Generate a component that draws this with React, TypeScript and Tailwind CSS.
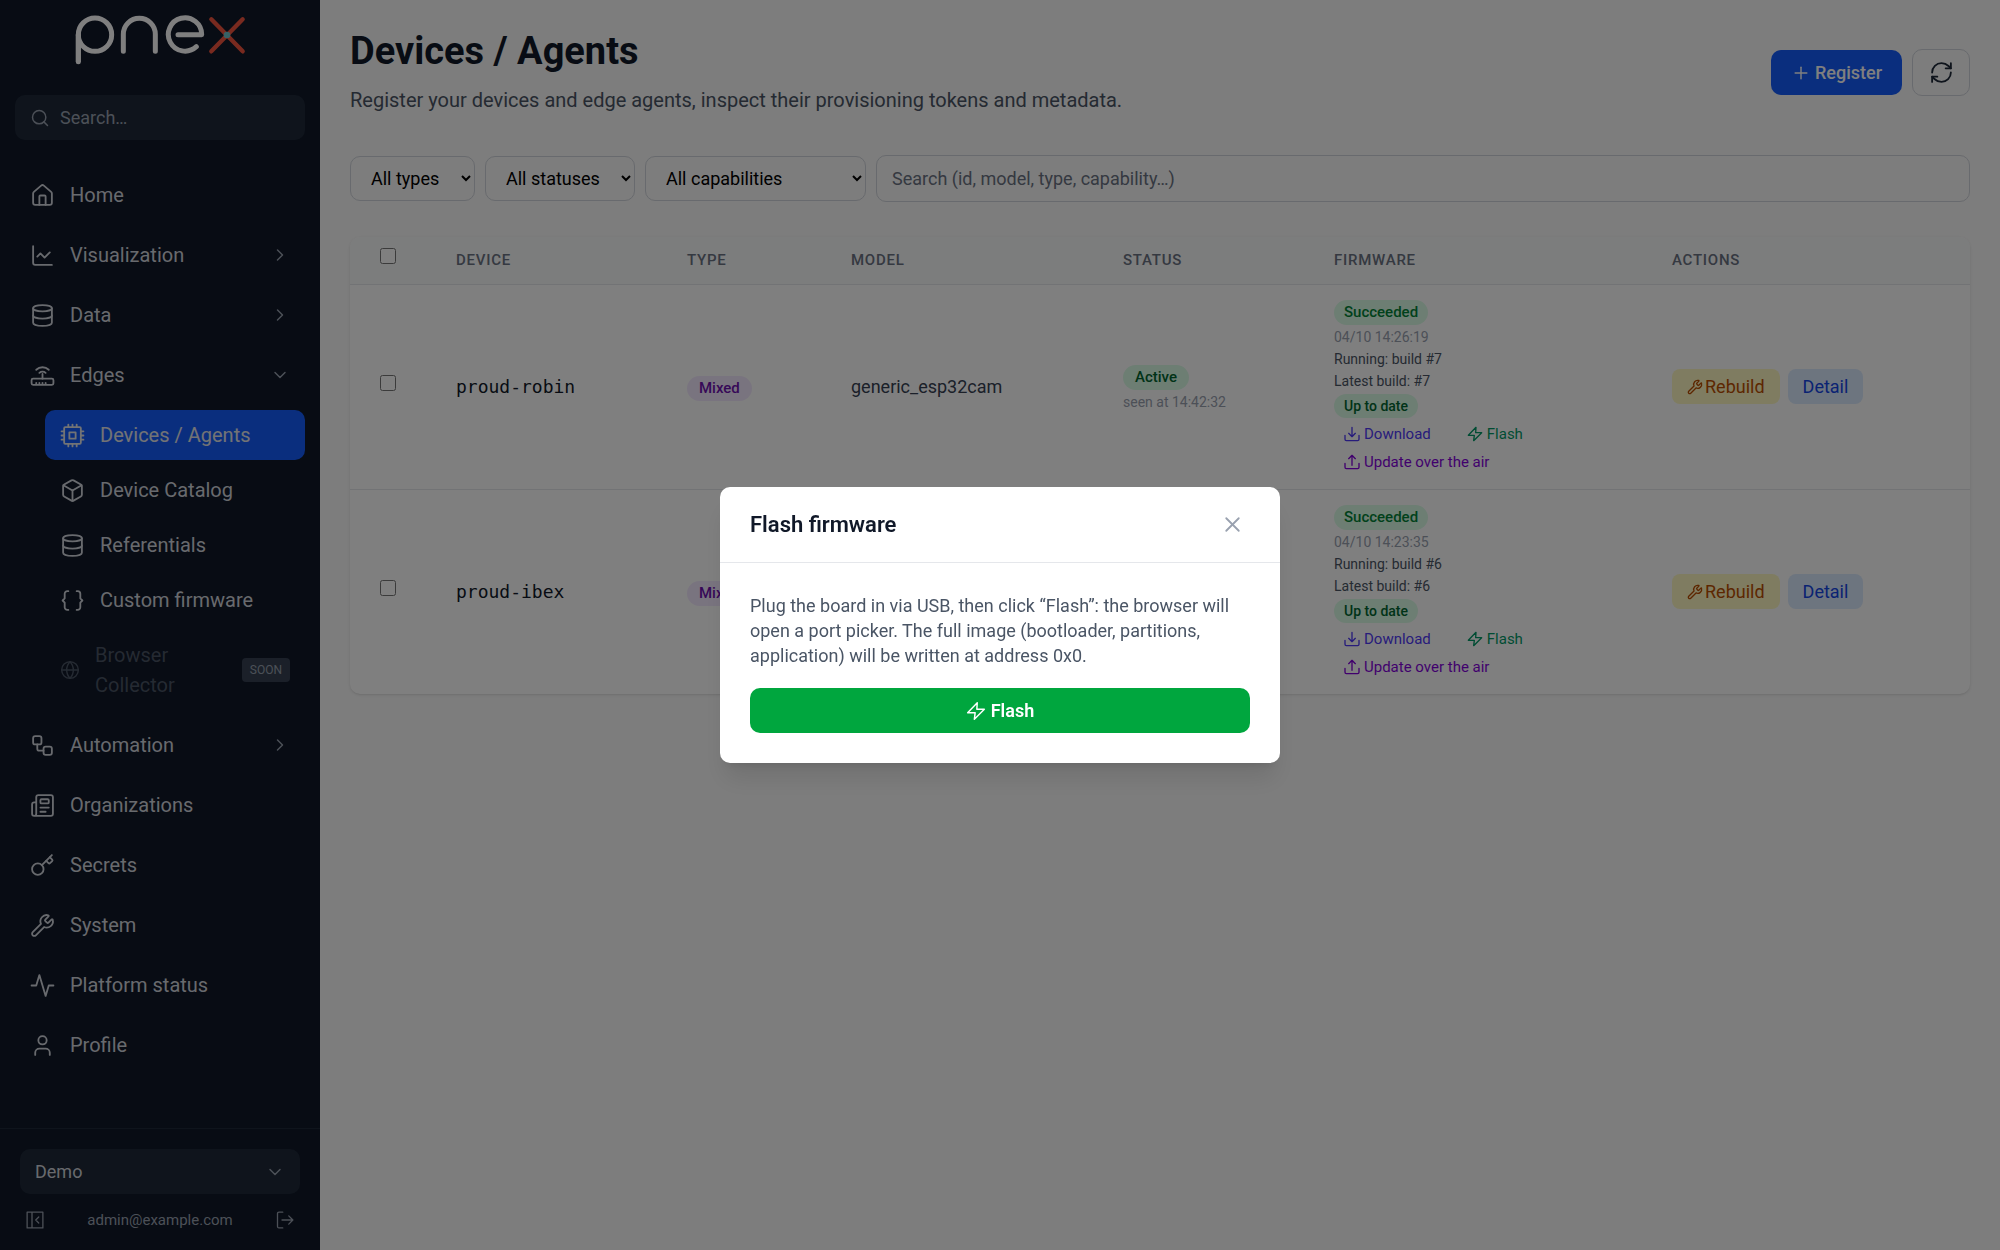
import React from 'react';
import {
  Box,
  ChartLine,
  ChevronDown,
  ChevronRight,
  Database,
  Globe,
  House,
  Key,
  Newspaper,
  Plus,
  RefreshCw,
  Search,
  User,
  Workflow,
  Wrench,
  X,
} from 'lucide-react';

interface IIconProps {
  className?: string;
  strokeWidth?: number;
}

interface IGlyphProps extends IIconProps {
  children: React.ReactNode;
}

function Glyph({ className, strokeWidth = 1.75, children }: IGlyphProps) {
  return (
    <svg
      viewBox="0 0 24 24"
      fill="none"
      stroke="currentColor"
      strokeWidth={strokeWidth}
      strokeLinecap="round"
      strokeLinejoin="round"
      aria-hidden="true"
      className={className}
    >
      {children}
    </svg>
  );
}

function RouterIcon({ className }: IIconProps) {
  return (
    <Glyph className={className}>
      <rect x="1.5" y="15" width="21" height="6" rx="1.5" />
      <path d="M12 10.500V15M6 20v-1M9 20v-1M12 20v-1M15 20v-1" />
      <path d="M9 9.500a4.400 4.400 0 0 1 6 0M6 6.500a8.600 8.600 0 0 1 12 0" />
    </Glyph>
  );
}

function ChipIcon({ className }: IIconProps) {
  return (
    <Glyph className={className}>
      <rect x="4" y="4" width="16" height="16" rx="1" />
      <rect x="9" y="9" width="6" height="6" />
      <path d="M8 4V1.500M12 4V1.500M16 4V1.500M8 22.500V20M12 22.500V20M16 22.500V20" />
      <path d="M4 8H1.500M4 12H1.500M4 16H1.500M22.500 8H20M22.500 12H20M22.500 16H20" />
    </Glyph>
  );
}

function BracesIcon({ className }: IIconProps) {
  return (
    <Glyph className={className}>
      <path d="M8 3H7a2.500 2.500 0 0 0-2.500 2.500V10L2.500 12l2 2v4.500A2.500 2.500 0 0 0 7 21h1" />
      <path d="M16 3h1a2.500 2.500 0 0 1 2.500 2.500V10l2 2-2 2v4.500A2.500 2.500 0 0 1 17 21h-1" />
    </Glyph>
  );
}

function PulseIcon({ className }: IIconProps) {
  return (
    <Glyph className={className}>
      <path d="M1.500 12H6l3-10 6 20 3-10h4.500" />
    </Glyph>
  );
}

function BoltIcon({ className, strokeWidth }: IIconProps) {
  return (
    <Glyph className={className} strokeWidth={strokeWidth}>
      <path d="M13.500 2 2 14h9l-1 8L22 10h-9z" />
    </Glyph>
  );
}

function DownloadIcon({ className }: IIconProps) {
  return (
    <Glyph className={className} strokeWidth={2}>
      <path d="M12 2v14M7 11l5 5 5-5M1.500 14v6a2 2 0 0 0 2 2h17a2 2 0 0 0 2-2v-6" />
    </Glyph>
  );
}

function UploadIcon({ className }: IIconProps) {
  return (
    <Glyph className={className} strokeWidth={2}>
      <path d="M12 17V2M7 7l5-5 5 5M1.500 14v6a2 2 0 0 0 2 2h17a2 2 0 0 0 2-2v-6" />
    </Glyph>
  );
}

function CollapseIcon({ className }: IIconProps) {
  return (
    <Glyph className={className}>
      <path d="M1.500 1.500h21v21h-21zM8 1.500v21M17 8l-4 4 4 4" />
    </Glyph>
  );
}

function LogoutIcon({ className }: IIconProps) {
  return (
    <Glyph className={className}>
      <path d="M9 1.500H4a2 2 0 0 0-2 2v17a2 2 0 0 0 2 2h5M8 12h14.500M17 6.500l5.500 5.500-5.500 5.500" />
    </Glyph>
  );
}

function Logo() {
  return (
    <svg viewBox="222 42 516 153" fill="none" strokeLinecap="round" role="img" aria-label="pnex" className="w-[172px]">
      <g stroke="#fff" strokeWidth="15">
        <circle cx="285" cy="104" r="50" />
        <path d="M235 104v82" strokeLinecap="butt" />
        <path d="M235 104v81" />
        <path d="M370 154v-51a48 48 0 0 1 96 0v51" />
        <path d="M534 104h71a50 50 0 1 0-16 36" strokeLinejoin="round" />
      </g>
      <path d="m634 58 94 96M728 58l-94 96" stroke="#f2543f" strokeWidth="13" />
      <circle cx="681" cy="105" r="10" fill="#6fc3cb" />
    </svg>
  );
}

const NAV_TOP = [
  { label: 'Home', icon: House },
  { label: 'Visualization', icon: ChartLine, chevron: ChevronRight },
  { label: 'Data', icon: Database, chevron: ChevronRight },
  { label: 'Edges', icon: RouterIcon, chevron: ChevronDown },
];

const NAV_EDGES = [
  { label: 'Devices / Agents', icon: ChipIcon, active: true },
  { label: 'Device Catalog', icon: Box },
  { label: 'Referentials', icon: Database },
  { label: 'Custom firmware', icon: BracesIcon },
];

const NAV_BOTTOM = [
  { label: 'Automation', icon: Workflow, chevron: ChevronRight },
  { label: 'Organizations', icon: Newspaper },
  { label: 'Secrets', icon: Key },
  { label: 'System', icon: Wrench },
  { label: 'Platform status', icon: PulseIcon },
  { label: 'Profile', icon: User },
];

const DEVICES = [
  { name: 'proud-robin', model: 'generic_esp32cam', seenAt: '14:42:32', builtAt: '04/10 14:26:19', build: 7 },
  { name: 'proud-ibex', model: 'generic_esp32cam', seenAt: '14:42:30', builtAt: '04/10 14:23:35', build: 6 },
];

interface INavItemProps {
  label: string;
  icon: React.ElementType;
  chevron?: React.ElementType;
  active?: boolean;
}

function NavItem({ label, icon: Icon, chevron: Chevron, active }: INavItemProps) {
  return (
    <a
      href="#"
      className={`flex items-center gap-[15px] h-[50px] px-[15px] rounded-[10px] ${active ? 'bg-blue-600 text-gray-200' : 'text-gray-300'}`}
    >
      <Icon strokeWidth={1.75} className="size-[25px]" />
      <span className="flex-1">{label}</span>
      {Chevron && <Chevron strokeWidth={1.75} className="size-5 text-gray-400" />}
    </a>
  );
}

function Sidebar() {
  return (
    <aside className="flex flex-col w-80 shrink-0 bg-gray-900 text-gray-300">
      <div className="flex justify-center pt-[14px]">
        <Logo />
      </div>

      <label className="flex items-center gap-[10px] h-[45px] mx-[15px] mt-[30px] px-[15px] rounded-[10px] bg-gray-800">
        <Search strokeWidth={1.75} className="size-5 shrink-0 text-gray-400" />
        <input
          type="text"
          aria-label="Search"
          placeholder="Search…"
          className="w-full text-[18px] outline-none placeholder:text-gray-400"
        />
      </label>

      <nav className="flex flex-col flex-1 gap-[10px] px-[15px] pt-[30px]">
        {NAV_TOP.map(item => <NavItem key={item.label} {...item} />)}

        <div className="flex flex-col gap-[5px] pl-[30px]">
          {NAV_EDGES.map(item => <NavItem key={item.label} {...item} />)}
          <div className="flex items-center gap-[15px] px-[15px] py-[10px] text-gray-600">
            <Globe strokeWidth={1.75} className="size-5 shrink-0" />
            <span className="flex-1">Browser Collector</span>
            <span className="px-2 py-[2px] rounded bg-gray-700 text-[12px] leading-5 text-gray-400">SOON</span>
          </div>
        </div>

        {NAV_BOTTOM.map(item => <NavItem key={item.label} {...item} />)}
      </nav>

      <div className="px-5 pt-5 pb-5 border-t border-gray-800">
        <button className="flex items-center justify-between w-full h-[45px] px-[15px] rounded-[10px] bg-gray-800 text-[18px] text-gray-300">
          Demo
          <ChevronDown strokeWidth={1.75} className="size-5 text-gray-400" />
        </button>
        <div className="flex items-center justify-between mt-4 px-[6px] text-[15px] leading-5 text-gray-400">
          <button aria-label="Collapse sidebar"><CollapseIcon className="size-[18px]" /></button>
          <span>admin@example.com</span>
          <button aria-label="Log out"><LogoutIcon className="size-[18px]" /></button>
        </div>
      </div>
    </aside>
  );
}

function PageHeader() {
  return (
    <header className="flex items-center justify-between">
      <div>
        <h1 className="text-[38px] leading-[43px] font-bold text-gray-900">Devices / Agents</h1>
        <p className="mt-3 text-gray-600">
          Register your devices and edge agents, inspect their provisioning tokens and metadata.
        </p>
      </div>
      <div className="flex items-center gap-[10px]">
        <button className="flex items-center gap-[4px] h-[45px] px-5 rounded-[10px] bg-blue-600 text-[18px] font-medium text-white">
          <Plus strokeWidth={1.75} className="size-5" />
          Register
        </button>
        <button aria-label="Refresh" className="flex items-center justify-center w-[58px] h-[47px] rounded-[10px] border border-gray-300 text-gray-800">
          <RefreshCw strokeWidth={1.75} className="size-[25px]" />
        </button>
      </div>
    </header>
  );
}

function Filters() {
  const selectClass = 'h-[45px] px-4 rounded-[10px] border border-gray-300 text-[18px] text-black';

  return (
    <div className="flex items-center gap-[10px] mt-10">
      <select aria-label="Type" className={`${selectClass} w-[125px]`}>
        <option>All types</option>
      </select>
      <select aria-label="Status" className={`${selectClass} w-[150px]`}>
        <option>All statuses</option>
      </select>
      <select aria-label="Capability" className={`${selectClass} w-[221px]`}>
        <option>All capabilities</option>
      </select>
      <input
        type="text"
        aria-label="Search devices"
        placeholder="Search (id, model, type, capability…)"
        className="flex-1 h-[47px] px-[15px] rounded-[10px] border border-gray-300 text-[18px] placeholder:text-gray-500"
      />
    </div>
  );
}

interface IFirmwareProps {
  builtAt: string;
  build: number;
}

function Firmware({ builtAt, build }: IFirmwareProps) {
  return (
    <div className="flex flex-col items-start text-[14px] leading-[22px] text-gray-600">
      <span className="px-[10px] rounded-full bg-green-100 text-[15px] leading-[25px] font-medium text-green-700">Succeeded</span>
      <span className="mt-px text-gray-400">{builtAt}</span>
      <span>Running: build #{build}</span>
      <span>Latest build: #{build}</span>
      <span className="my-[2px] px-[10px] rounded-full bg-green-100 leading-6 font-medium text-green-800">Up to date</span>
      <div className="flex gap-4 text-[15px] leading-7">
        <button className="flex items-center gap-1 px-[10px] text-indigo-600">
          <DownloadIcon className="size-4" />
          Download
        </button>
        <button className="flex items-center gap-1 px-[10px] text-emerald-600">
          <BoltIcon strokeWidth={2} className="size-4" />
          Flash
        </button>
      </div>
      <button className="flex items-center gap-1 px-[10px] text-[15px] leading-7 text-purple-700">
        <UploadIcon className="size-4" />
        Update over the air
      </button>
    </div>
  );
}

function DevicesTable() {
  return (
    <div className="mt-[35px] rounded-[10px] bg-white shadow-sm overflow-hidden">
      <table className="w-full table-fixed text-left text-[18px]">
        <thead className="bg-gray-50 border-b border-gray-200">
          <tr className="h-[47px] text-[15px] tracking-wider text-gray-500 uppercase">
            <th className="w-[76px] px-[30px]">
              <input type="checkbox" aria-label="Select all devices" className="block size-4 mb-2" />
            </th>
            <th className="w-[231px] px-[30px] font-medium">Device</th>
            <th className="w-[164px] px-[30px] font-medium">Type</th>
            <th className="w-[272px] px-[30px] font-medium">Model</th>
            <th className="w-[211px] px-[30px] font-medium">Status</th>
            <th className="w-[338px] px-[30px] font-medium">Firmware</th>
            <th className="w-[328px] px-[30px] font-medium">Actions</th>
          </tr>
        </thead>
        <tbody className="divide-y divide-gray-200">
          {DEVICES.map(device => (
            <tr key={device.name}>
              <td className="px-[30px]">
                <input type="checkbox" aria-label={`Select ${device.name}`} className="block size-4 mb-2" />
              </td>
              <td className="px-[30px] font-['DejaVu_Sans_Mono',monospace] text-gray-900">{device.name}</td>
              <td className="px-[30px]">
                <span className="inline-block px-3 rounded-full bg-purple-100 text-[15px] leading-[25px] font-medium text-purple-800">Mixed</span>
              </td>
              <td className="px-[30px] text-gray-700">{device.model}</td>
              <td className="px-[30px]">
                <span className="inline-block px-3 rounded-full bg-green-100 text-[15px] leading-[25px] font-medium text-green-800">Active</span>
                <div className="text-[14px] leading-[22px] text-gray-400">seen at {device.seenAt}</div>
              </td>
              <td className="px-[30px] pt-[15px] pb-[13px]">
                <Firmware builtAt={device.builtAt} build={device.build} />
              </td>
              <td className="px-[30px]">
                <div className="flex gap-2 leading-[35px]">
                  <button className="flex items-center gap-[2px] px-[15px] rounded-[8px] bg-yellow-100 text-amber-700">
                    <Wrench strokeWidth={2} className="size-4" />
                    Rebuild
                  </button>
                  <button className="px-[15px] rounded-[8px] bg-blue-100 text-blue-700">Detail</button>
                </div>
              </td>
            </tr>
          ))}
        </tbody>
      </table>
    </div>
  );
}

function FlashDialog() {
  return (
    <div className="fixed inset-0 flex items-center justify-center bg-black/50">
      <div role="dialog" aria-modal="true" aria-labelledby="flash-title" className="w-[560px] rounded-[10px] bg-white shadow-xl">
        <div className="flex items-center justify-between h-[76px] px-[30px] border-b border-gray-200">
          <h2 id="flash-title" className="text-[22px] font-semibold text-gray-900">Flash firmware</h2>
          <button aria-label="Close" className="p-[5px] text-gray-400">
            <X strokeWidth={1.75} className="size-[25px]" />
          </button>
        </div>
        <div className="p-[30px]">
          <p className="text-[18px] leading-[25px] text-gray-600">
            Plug the board in via USB, then click “Flash”: the browser will open a port picker. The full image
            (bootloader, partitions, application) will be written at address 0x0.
          </p>
          <button className="flex items-center justify-center gap-[5px] w-full h-[45px] mt-5 rounded-[10px] bg-green-600 text-[18px] font-semibold text-white">
            <BoltIcon className="size-5" />
            Flash
          </button>
        </div>
      </div>
    </div>
  );
}

export default function App() {
  return (
    <div className="flex min-h-screen bg-[#fafafa] font-['Roboto',sans-serif] text-[20px] leading-[30px]">
      <Sidebar />

      <main className="flex-1 p-[30px]">
        <PageHeader />
        <Filters />
        <DevicesTable />
      </main>

      <FlashDialog />
    </div>
  );
}
